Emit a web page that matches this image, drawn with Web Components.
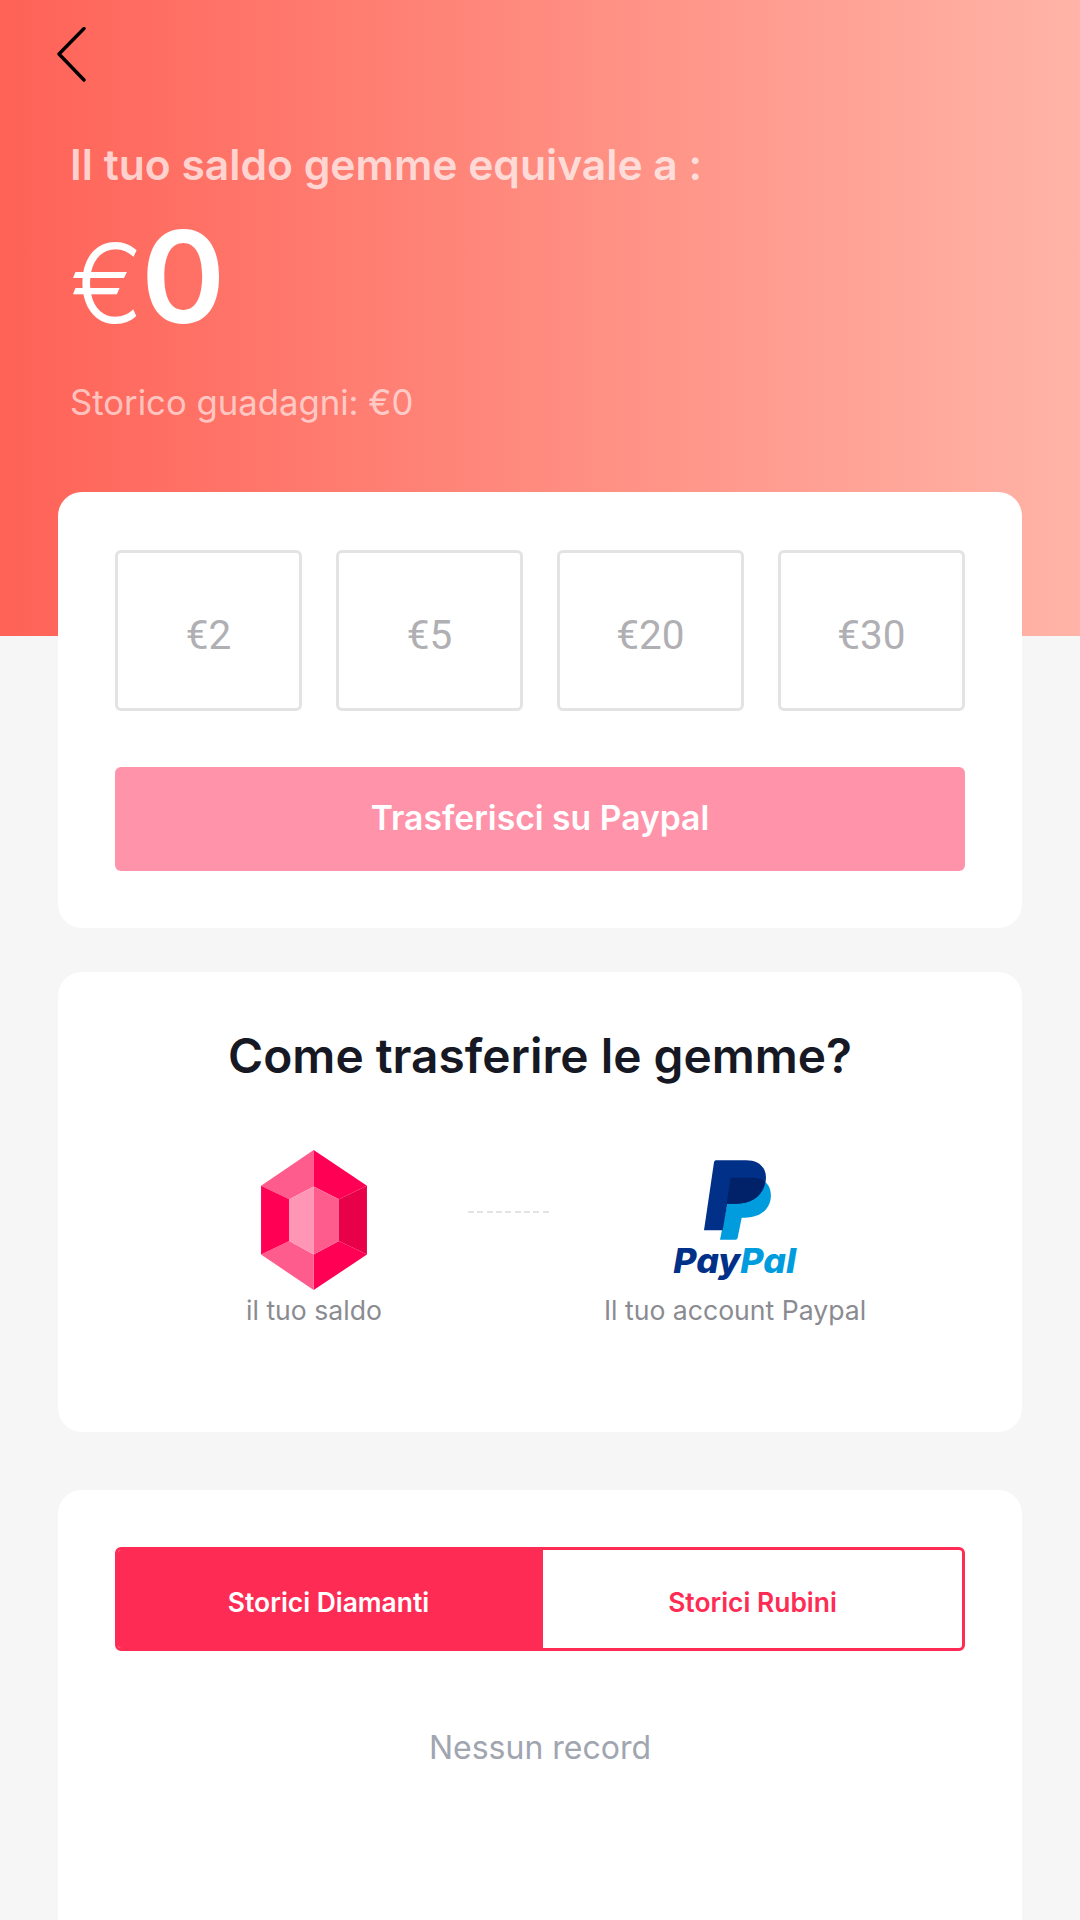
<!DOCTYPE html>
<html lang="it">
<head>
<meta charset="utf-8">
<title>Saldo gemme</title>
<style>
  html, body { margin: 0; padding: 0; }
  body {
    width: 1080px;
    min-height: 1920px;
    overflow: hidden;
    background: #f6f6f6;
    font-family: Inter, Lato, sans-serif;
  }
</style>
</head>
<body>
<balance-header></balance-header>
<withdraw-card></withdraw-card>
<howto-card></howto-card>
<history-card></history-card>

<script>
/**
 * Gradient header with the back arrow and the balance.
 */
customElements.define('balance-header',
  class extends HTMLElement {
    constructor () {
      super()
      this.attachShadow({ mode: 'open' }).innerHTML = `
        <style>
          :host {
            display: block;
            height: 636px;
            box-sizing: border-box;
            padding: 27px 0 0 70px;
            color: #fff;
            background: linear-gradient(90deg, #ff6257 0%, #ffb4a7 100%);
          }
          svg { display: block; margin-left: -13px; }
          .label {
            margin: 57px 0 0;
            font-size: 42.6px;
            line-height: 50px;
            font-weight: 600;
            color: rgba(255, 255, 255, .7);
          }
          .amount {
            display: flex;
            align-items: baseline;
            height: 118px;
            margin-top: 28px;
            line-height: 118px;
          }
          .euro { font-size: 110px; font-weight: 300; margin-right: -3px; }
          .zero { font-size: 128px; font-weight: 600; }
          .total {
            margin: 45px 0 0;
            font-size: 34.7px;
            line-height: 42px;
            color: rgba(255, 255, 255, .62);
          }
        </style>
        <svg width="32" height="56" viewBox="0 0 32 56" fill="none" stroke="#000" stroke-width="3.4" stroke-linecap="round" stroke-linejoin="round">
          <path d="M27 1.5 2 27 27 53" />
        </svg>
        <p class="label">Il tuo saldo gemme equivale a :</p>
        <div class="amount"><span class="euro">€</span><span class="zero">0</span></div>
        <p class="total">Storico guadagni: €0</p>
      `
    }
  }
)

/**
 * White rounded card, the three sections below the header use it.
 */
customElements.define('app-card',
  class extends HTMLElement {
    constructor () {
      super()
      this.attachShadow({ mode: 'open' }).innerHTML = `
        <style>
          :host {
            display: block;
            box-sizing: border-box;
            width: 964px;
            margin: 0 58px;
            background: #fff;
            border-radius: 24px;
          }
        </style>
        <slot></slot>
      `
    }
  }
)

/**
 * One selectable amount.
 */
customElements.define('amount-option',
  class extends HTMLElement {
    constructor () {
      super()
      this.attachShadow({ mode: 'open' }).innerHTML = `
        <style>
          :host {
            display: flex;
            align-items: center;
            justify-content: center;
            box-sizing: border-box;
            height: 161px;
            padding-top: 8px;
            border: 3px solid #e3e3e3;
            border-radius: 6px;
            font-family: Roboto, sans-serif;
            font-size: 40.5px;
            color: #b0b0b4;
          }
        </style>
        <slot></slot>
      `
    }
  }
)

/**
 * Amount choice and the transfer button.
 */
customElements.define('withdraw-card',
  class extends HTMLElement {
    constructor () {
      super()
      this.attachShadow({ mode: 'open' }).innerHTML = `
        <style>
          :host { display: block; margin-top: -144px; }
          .inner { padding: 58px 57px 57px; }
          .options {
            display: grid;
            grid-template-columns: repeat(4, 187px);
            gap: 34px;
          }
          .transfer {
            display: flex;
            align-items: center;
            justify-content: center;
            box-sizing: border-box;
            height: 104px;
            margin-top: 56px;
            padding-bottom: 4px;
            border-radius: 6px;
            background: #ff93aa;
            color: #fff;
            font-size: 33.7px;
            font-weight: 600;
          }
        </style>
        <app-card>
          <div class="inner">
            <div class="options">
              <amount-option>€2</amount-option>
              <amount-option>€5</amount-option>
              <amount-option>€20</amount-option>
              <amount-option>€30</amount-option>
            </div>
            <div class="transfer">Trasferisci su Paypal</div>
          </div>
        </app-card>
      `
    }
  }
)

/**
 * Explains the transfer from gem balance to the Paypal account.
 */
customElements.define('howto-card',
  class extends HTMLElement {
    constructor () {
      super()
      this.attachShadow({ mode: 'open' }).innerHTML = `
        <style>
          :host { display: block; margin-top: 44px; }
          .inner { height: 460px; box-sizing: border-box; padding-top: 55px; }
          h2 {
            margin: 0;
            text-align: center;
            font-size: 47.8px;
            line-height: 58px;
            font-weight: 600;
            color: #161823;
          }
          .flow { display: flex; margin: 65px 0 0 156px; align-items: flex-start; }
          .step {
            display: flex;
            flex-direction: column;
            align-items: center;
            font-size: 26.6px;
            line-height: 30px;
            color: #8a8b91;
          }
          .gem { width: 200px; }
          .pay { width: 300px; margin-left: 36px; }
          .pics { height: 145px; display: flex; align-items: flex-start; }
          .line {
            width: 81px;
            height: 2px;
            margin: 61px 0 0 54px;
            background: repeating-linear-gradient(90deg, #e3e3e3 0 6px, transparent 6px 9.33px);
          }
        </style>
        <app-card>
          <div class="inner">
            <h2>Come trasferire le gemme?</h2>
            <div class="flow">
              <div class="step gem">
                <div class="pics">
                  <svg width="106" height="140" viewBox="124 62 314 415">
                    <path fill="#ff5c8e" d="M124 168 280 62V170L208 208Z" />
                    <path fill="#ff0055" d="M280 62 438 168 355 208 280 170Z" />
                    <path fill="#e80049" d="M438 168V372L355 332V208Z" />
                    <path fill="#ff0055" d="M280 372 355 332 438 372 280 477Z" />
                    <path fill="#ff5c8e" d="M124 372 208 332 280 372V477Z" />
                    <path fill="#ff0055" d="M124 168 208 208V332L124 372Z" />
                    <path fill="#ff96b6" d="M208 208 280 170V372L208 332Z" />
                    <path fill="#ff5c8e" d="M280 170 355 208V332L280 372Z" />
                  </svg>
                </div>
                <span>il tuo saldo</span>
              </div>
              <div class="line"></div>
              <div class="step pay">
                <div class="pics">
                  <svg width="130" height="130" viewBox="90 50 390 390" style="margin-top:7px">
                    <path fill="#009cde" d="M272 112 372 122C392 135 398 165 388 190 376 220 345 232 315 232H305L293 292Q292 298 286 298H240L262 190Z" />
                    <path fill="#003087" d="M228 60H318C362 60 385 88 376 128 366 172 330 190 288 190H262L248 270H192L222 66Q223 60 228 60Z" />
                    <path fill="#012169" d="M272 112H340Q360 112 375 124C366 172 330 190 288 190H260Z" />
                    <text x="100" y="398" font-family="Inter, sans-serif" font-size="102" font-weight="800" font-style="italic" textLength="368" lengthAdjust="spacingAndGlyphs"><tspan fill="#003087">Pay</tspan><tspan fill="#009cde">Pal</tspan></text>
                  </svg>
                </div>
                <span>Il tuo account Paypal</span>
              </div>
            </div>
          </div>
        </app-card>
      `
    }
  }
)

/**
 * Tabs for the history and its empty state.
 */
customElements.define('history-card',
  class extends HTMLElement {
    constructor () {
      super()
      this.attachShadow({ mode: 'open' }).innerHTML = `
        <style>
          :host { display: block; margin-top: 58px; }
          .inner { height: 460px; box-sizing: border-box; padding: 57px 57px 0; }
          .tabs {
            display: grid;
            grid-template-columns: 425px 1fr;
            height: 104px;
            box-sizing: border-box;
            border: 3px solid #fe2c55;
            border-radius: 6px;
            overflow: hidden;
            font-size: 26.4px;
            font-weight: 600;
          }
          .tabs div { display: flex; align-items: center; justify-content: center; padding-top: 5px; }
          .on { background: #fe2c55; color: #fff; padding-right: 4px; }
          .off { color: #fe2c55; }
          .empty {
            margin-top: 77px;
            text-align: center;
            font-size: 32px;
            line-height: 40px;
            color: #a0a5b0;
          }
        </style>
        <app-card>
          <div class="inner">
            <div class="tabs">
              <div class="on">Storici Diamanti</div>
              <div class="off">Storici Rubini</div>
            </div>
            <div class="empty">Nessun record</div>
          </div>
        </app-card>
      `
    }
  }
)
</script>
</body>
</html>
